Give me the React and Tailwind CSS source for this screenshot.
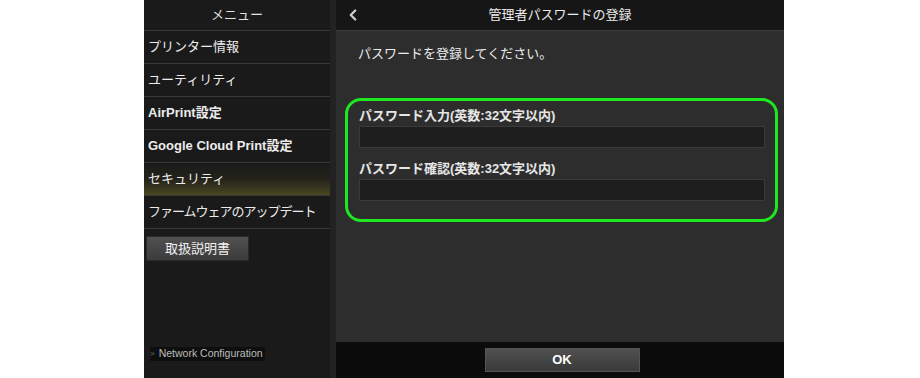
import { ChevronLeft } from 'lucide-react';

const font = { fontFamily: '"Liberation Sans", "Noto Sans CJK JP", sans-serif' };

const menuItems = [
  { name: 'プリンター情報' },
  { name: 'ユーティリティ' },
  { name: 'AirPrint設定', bold: true },
  { name: 'Google Cloud Print設定', bold: true },
  { name: 'セキュリティ', active: true },
  { name: 'ファームウェアのアップデート', tight: true },
];

const Field = ({ label }) => (
  <div className="flex flex-col">
    <span className="text-[13px] font-bold leading-4 text-[#e6e6e6]">{label}</span>
    <div className="mt-[2px] h-[22px] border border-[#3a3a3a] bg-[#1e1e1e]" />
  </div>
);

export default function App() {
  return (
    <div className="flex h-[378px] w-[920px] bg-white" style={font}>
      <div className="w-[144px]" />

      <aside className="flex w-[192px] bg-[#1a1a1a]">
        <div className="flex flex-1 flex-col">
          <div className="flex h-[31px] items-center justify-center border-b border-[#383838] text-[13px] text-[#e0e0e0]">
            メニュー
          </div>
          {menuItems.map((item) => (
            <div
              key={item.name}
              className={
                'flex h-[33px] items-center whitespace-nowrap border-b border-[#383838] px-[4px] text-[13px] text-[#ececec] ' +
                (item.bold ? 'font-bold ' : '') +
                (item.tight ? 'tracking-[-1px] ' : '') +
                (item.active ? 'bg-gradient-to-b from-[#1a1a1a] via-[#24231a] to-[#4a4620]' : '')
              }
            >
              {item.name}
            </div>
          ))}
          <div className="px-[2px] pt-[7px]">
            <button className="h-[25px] w-[103px] border border-[#2a2a2a] bg-gradient-to-b from-[#515151] to-[#3b3b3b] text-[13px] text-[#f0f0f0]">
              取扱説明書
            </button>
          </div>
          <div className="flex-1" />
          <div className="mb-[17px] ml-[6px] flex h-[14px] items-center self-start whitespace-nowrap bg-[#0e0e0e] pr-[2px] text-[10.5px] text-[#bdbdbd]">
            <span className="mr-[4px] text-[8px] text-[#777]">&gt;</span>Network Configuration
          </div>
        </div>
        <div className="w-[6px] bg-[#222222]" />
      </aside>

      <main className="flex w-[448px] flex-col bg-[#2d2d2d]">
        <div className="relative flex h-[31px] items-center justify-center border-b border-[#3c3c3c] bg-[#161616] text-[13px] text-[#ececec]">
          <ChevronLeft size={18} strokeWidth={3} className="absolute left-[8px] text-[#d0d0d0]" />
          管理者パスワードの登録
        </div>
        <div className="flex-1 pl-[9px] pr-[6px]">
          <p className="pl-[13px] pt-[13px] text-[13px] text-[#ececec]">パスワードを登録してください。</p>
          <div className="mt-[34px] flex h-[124px] flex-col gap-[13px] rounded-[16px] border-[3px] border-[#1ee81e] pl-[11px] pr-[10px] pt-[7px]">
            <Field label="パスワード入力(英数:32文字以内)" />
            <Field label="パスワード確認(英数:32文字以内)" />
          </div>
        </div>
        <div className="flex h-[36px] justify-center bg-[#0b0b0b] pl-[4px] pt-[6px]">
          <button className="h-[24px] w-[155px] border border-[#555] bg-gradient-to-b from-[#505050] to-[#3a3a3a] text-[13px] font-bold text-white">
            OK
          </button>
        </div>
      </main>

      <div className="flex-1" />
    </div>
  );
}
